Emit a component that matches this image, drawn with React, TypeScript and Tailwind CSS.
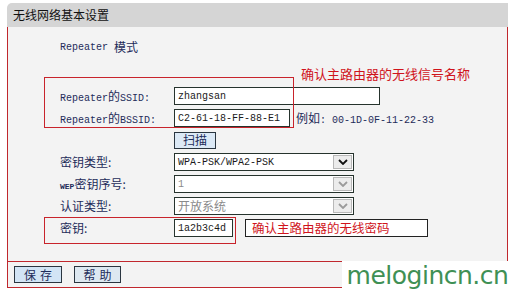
import type { ReactNode } from "react";

function Cn({ children, className = "" }: { children: ReactNode; className?: string }) {
  return <span className={`font-['Noto_Sans_CJK_SC',sans-serif] text-[12px] ${className}`}>{children}</span>;
}

function Row({ label, children }: { label: ReactNode; children?: ReactNode }) {
  return (
    <div className="flex h-[22px] items-center pl-[52px]">
      <div className="flex w-[114px] items-center">{label}</div>
      {children}
    </div>
  );
}

function TextBox({ value, width }: { value: string; width: string }) {
  return (
    <div className={`flex h-[18px] items-center border border-[#26332d] bg-white pl-[3px] text-[#1a1a1a] ${width}`}>
      {value}
    </div>
  );
}

function Select({ value, disabled }: { value: ReactNode; disabled?: boolean }) {
  return (
    <div className="flex h-[18px] w-[180px] border border-[#26332d] bg-white">
      <div className={`flex flex-1 items-center pl-[3px] ${disabled ? "text-[#8a8a8a]" : "text-[#1a1a1a]"}`}>{value}</div>
      <div className="m-px flex w-[19px] items-center justify-center border border-[#b8b8b8] bg-[#ececec]">
        <svg width="10" height="6" viewBox="0 0 10 6">
          <path d="M1 1 L5 5 L9 1" fill="none" stroke={disabled ? "#9a9a9a" : "#111"} strokeWidth="1.8" />
        </svg>
      </div>
    </div>
  );
}

function Btn({ children, width, bg }: { children: ReactNode; width: string; bg: string }) {
  return (
    <div className={`flex h-[17px] items-center justify-center border border-[#2a3540] ${bg} ${width}`}>
      <Cn className="tracking-[4px] pl-[4px]">{children}</Cn>
    </div>
  );
}

export default function App() {
  return (
    <div className="relative h-[291px] w-[513px] overflow-hidden bg-white pt-[3px] font-['Liberation_Mono','Noto_Sans_CJK_SC',monospace] text-[10px] text-[#1e2c5a]">
      <div className="ml-[7px] flex h-[24px] w-[501px] items-center rounded-tl-[5px] bg-[#d5d5d5] pl-[6px]">
        <Cn className="text-[#111]">无线网络基本设置</Cn>
      </div>

      <div className="ml-[7px] h-[235px] w-[501px] border-x border-b border-[#c0272d] bg-[#f3f3f3] pt-[9px]">
        <div className="flex h-[22px] items-center gap-[6px] pl-[52px]">
          <span>Repeater</span>
          <Cn>模式</Cn>
        </div>
        <div className="h-[27px] pl-[293px] pt-[8px]">
          <span className="font-['Noto_Sans_CJK_SC',sans-serif] text-[13px] leading-[16px] text-[#d0141c]">确认主路由器的无线信号名称</span>
        </div>
        <Row
          label={
            <span>
              Repeater<Cn>的</Cn>SSID:
            </span>
          }
        >
          <TextBox value="zhangsan" width="w-[206px]" />
        </Row>
        <Row
          label={
            <span>
              Repeater<Cn>的</Cn>BSSID:
            </span>
          }
        >
          <TextBox value="C2-61-18-FF-88-E1" width="w-[116px]" />
          <span className="ml-[6px] text-[#1e2c5a]">
            <Cn>例如</Cn>: 00-1D-0F-11-22-33
          </span>
        </Row>
        <Row label="">
          <div className="flex h-[17px] w-[42px] items-center justify-center border border-[#2a3540] bg-[#dce9f6]">
            <Cn>扫描</Cn>
          </div>
        </Row>
        <Row label={<Cn>密钥类型:</Cn>}>
          <Select value="WPA-PSK/WPA2-PSK" />
        </Row>
        <Row
          label={
            <span>
              <span className="text-[8px] font-bold">WEP</span>
              <Cn>密钥序号:</Cn>
            </span>
          }
        >
          <Select value="1" disabled />
        </Row>
        <Row label={<Cn>认证类型:</Cn>}>
          <Select value={<Cn>开放系统</Cn>} disabled />
        </Row>
        <Row label={<Cn>密钥:</Cn>}>
          <TextBox value="1a2b3c4d" width="w-[59px]" />
          <div className="ml-[12px] flex h-[18px] w-[183px] items-center border border-[#222] bg-white pl-[6px]">
            <span className="font-['Noto_Sans_CJK_SC',sans-serif] text-[12.5px] leading-[16px] text-[#d0141c]">确认主路由器的无线密码</span>
          </div>
        </Row>
      </div>

      <div className="ml-[7px] flex h-[26px] w-[501px] items-center gap-[12px] border-x border-b border-[#c0272d] bg-[#f3f3f3] pl-[6px]">
        <Btn width="w-[48px]" bg="bg-[#d2e4f5]">保存</Btn>
        <Btn width="w-[47px]" bg="bg-[#dde8f1]">帮助</Btn>
      </div>

      {/* annotation boxes */}
      <div className="pointer-events-none absolute left-[44px] top-[77px] h-[51px] w-[250px] border border-[#c8232b]" />
      <div className="pointer-events-none absolute left-[44px] top-[217px] h-[27px] w-[192px] border border-[#c8232b]" />

      {/* watermark */}
      <div className="absolute left-[342px] top-[261px] flex h-[30px] w-[171px] items-center justify-center bg-white">
        <span className="font-['DejaVu_Sans',sans-serif] text-[25px] leading-[28px] tracking-[-0.5px] text-[#3f9055]">melogincn.cn</span>
      </div>
    </div>
  );
}
